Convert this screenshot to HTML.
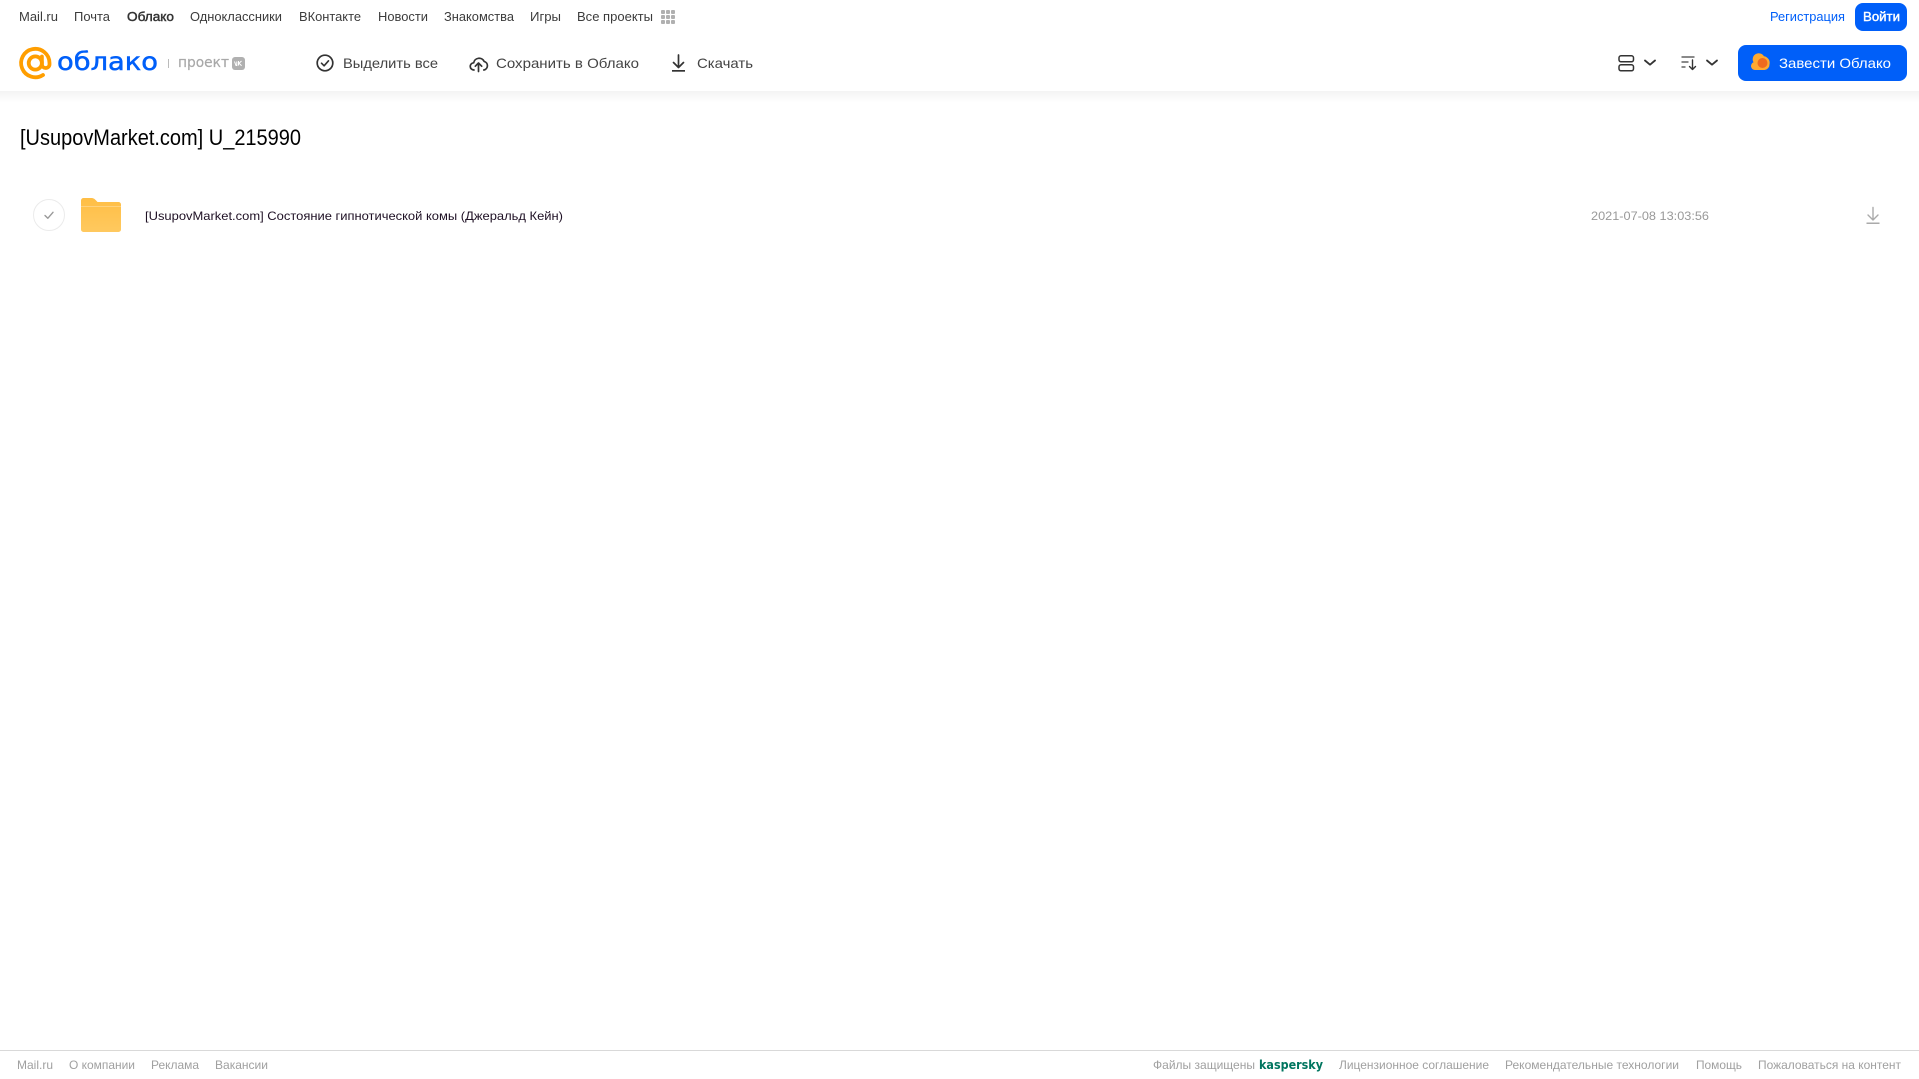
<!DOCTYPE html>
<html lang="ru">
<head>
<meta charset="utf-8">
<title>Облако</title>
<style>
html,body{margin:0;padding:0;background:#fff;width:1919px;height:1079px;overflow:hidden}
.shadow{position:absolute;left:0;top:91px;width:1919px;height:12px;background:linear-gradient(#f3f3f3,#fff)}
svg{position:absolute;left:0;top:0;display:block}
text{font-family:"Liberation Sans",sans-serif;white-space:pre}
.n{font-size:13px;fill:#3c3c3c}
.t{font-size:14px;fill:#444}
.f{font-size:12px;fill:#a0a0a0}
.d{font-family:"DejaVu Sans","Liberation Sans",sans-serif}
</style>
</head>
<body>
<div class="shadow"></div>
<svg width="1919" height="1079" viewBox="0 0 1919 1079" xmlns="http://www.w3.org/2000/svg">
  <!-- top nav -->
  <text class="n" x="19" y="21" textLength="39" lengthAdjust="spacingAndGlyphs">Mail.ru</text>
  <text class="n" x="74" y="21" textLength="36" lengthAdjust="spacingAndGlyphs">Почта</text>
  <text class="n" x="127" y="21" style="fill:#333" stroke="#333" stroke-width=".45" textLength="47" lengthAdjust="spacingAndGlyphs">Облако</text>
  <text class="n" x="190" y="21" textLength="92" lengthAdjust="spacingAndGlyphs">Одноклассники</text>
  <text class="n" x="299" y="21" textLength="62" lengthAdjust="spacingAndGlyphs">ВКонтакте</text>
  <text class="n" x="378" y="21" textLength="50" lengthAdjust="spacingAndGlyphs">Новости</text>
  <text class="n" x="444" y="21" textLength="70" lengthAdjust="spacingAndGlyphs">Знакомства</text>
  <text class="n" x="530" y="21" textLength="31" lengthAdjust="spacingAndGlyphs">Игры</text>
  <text class="n" x="577" y="21" textLength="76" lengthAdjust="spacingAndGlyphs">Все проекты</text>
  <g fill="#b0b0b0">
    <rect x="661" y="10" width="4" height="4" rx="1"/><rect x="666" y="10" width="4" height="4" rx="1"/><rect x="671" y="10" width="4" height="4" rx="1"/>
    <rect x="661" y="15" width="4" height="4" rx="1"/><rect x="666" y="15" width="4" height="4" rx="1"/><rect x="671" y="15" width="4" height="4" rx="1"/>
    <rect x="661" y="20" width="4" height="4" rx="1"/><rect x="666" y="20" width="4" height="4" rx="1"/><rect x="671" y="20" width="4" height="4" rx="1"/>
  </g>
  <text class="n" x="1770" y="21" style="fill:#005ff9" textLength="75" lengthAdjust="spacingAndGlyphs">Регистрация</text>
  <rect x="1855" y="3" width="52" height="28" rx="8" fill="#005ff9"/>
  <text class="n" x="1863" y="21" style="fill:#fff" stroke="#fff" stroke-width=".4" textLength="37" lengthAdjust="spacingAndGlyphs">Войти</text>

  <!-- logo -->
  <g fill="none" stroke="#ff9e00" stroke-width="3.8" stroke-linecap="round">
    <circle cx="35.300" cy="63" r="6.600"/>
    <path d="M41.900 56.500V64.500a3.700 3.700 0 0 0 7.600 -.6V63a14.200 14.200 0 1 0 -6.500 12"/>
  </g>
  <text class="d" x="57" y="70" font-size="25" fill="#005ff9" stroke="#005ff9" stroke-width=".5" textLength="101" lengthAdjust="spacingAndGlyphs">облако</text>
  <rect x="168" y="59" width="1" height="9" fill="#bbb"/>
  <text class="d" x="178" y="67" font-size="14" fill="#a8a8a8" stroke="#a8a8a8" stroke-width=".2" textLength="51" lengthAdjust="spacingAndGlyphs">проект</text>
  <rect x="232" y="57" width="13" height="13" rx="3" fill="#b0b0b0"/>
  <path d="M234.500 61.500l1.500 4h.8v-4M238.500 61v4.500M241.500 61l-2.500 2.300 2.600 2.400" fill="none" stroke="#fff" stroke-width="1"/>

  <!-- toolbar -->
  <circle cx="325" cy="63" r="7.800" fill="none" stroke="#333" stroke-width="1.700"/>
  <path d="M321.500 63.200l2.600 2.600 4.400-5" fill="none" stroke="#333" stroke-width="1.600" stroke-linecap="round" stroke-linejoin="round"/>
  <text class="t" x="343" y="68" textLength="95" lengthAdjust="spacingAndGlyphs">Выделить все</text>

  <path d="M474 70a3.600 3.600 0 0 1 -.3 -7.200a5.500 5.500 0 0 1 10.400 -1.400a4.400 4.400 0 0 1 -.3 8.600" fill="none" stroke="#333" stroke-width="1.700" stroke-linecap="round" stroke-linejoin="round"/>
  <path d="M478.500 71.500V63M475.300 66.200l3.200 -3.200 3.200 3.200" fill="none" stroke="#333" stroke-width="1.700" stroke-linecap="round" stroke-linejoin="round"/>
  <text class="t" x="496" y="68" textLength="143" lengthAdjust="spacingAndGlyphs">Сохранить в Облако</text>

  <path d="M678.500 55V67.500M673.500 62.500l5 5 5-5" fill="none" stroke="#333" stroke-width="1.700" stroke-linecap="round" stroke-linejoin="round"/>
  <rect x="672" y="70" width="13" height="1.700" fill="#333"/>
  <text class="t" x="697" y="68" textLength="56" lengthAdjust="spacingAndGlyphs">Скачать</text>

  <!-- right tools -->
  <rect x="1619" y="55.800" width="14.500" height="6" rx="2" fill="none" stroke="#333" stroke-width="1.500"/>
  <rect x="1619" y="64.800" width="14.500" height="6" rx="2" fill="none" stroke="#333" stroke-width="1.500"/>
  <path d="M1645 60.500l5 4.200 5-4.200" fill="none" stroke="#333" stroke-width="1.800" stroke-linecap="round" stroke-linejoin="round"/>
  <path d="M1681.500 57h13M1681.500 62h7M1681.500 67h4" fill="none" stroke="#444" stroke-width="1.200"/>
  <path d="M1692.500 60v9.500M1689.500 66.500l3 3 3-3" fill="none" stroke="#333" stroke-width="1.400" stroke-linecap="round" stroke-linejoin="round"/>
  <path d="M1707 60.500l5 4.200 5-4.200" fill="none" stroke="#333" stroke-width="1.800" stroke-linecap="round" stroke-linejoin="round"/>

  <rect x="1738" y="45" width="169" height="36" rx="8" fill="#005ff9"/>
  <path d="M1755 70a4 4 0 0 1 -1.500 -7.700a6 6 0 0 1 10.500 -6a6.500 6.500 0 0 1 5.500 8a5.500 5.500 0 0 1 -5 5.700z" fill="#ffa930"/>
  <circle cx="1762.500" cy="63" r="5" fill="#ee6a1f"/>
  <text class="t" x="1779" y="68" style="fill:#fff" textLength="112" lengthAdjust="spacingAndGlyphs">Завести Облако</text>

  <!-- title -->
  <text x="20" y="145" font-size="22" fill="#000" textLength="281" lengthAdjust="spacingAndGlyphs">[UsupovMarket.com] U_215990</text>

  <!-- row -->
  <circle cx="49" cy="215" r="15.500" fill="#fff" stroke="#ebebeb" stroke-width="1"/>
  <path d="M45 215.500l2.800 2.800 5.200-6" fill="none" stroke="#999" stroke-width="1.400" stroke-linecap="round" stroke-linejoin="round"/>
  <defs>
    <linearGradient id="fg" x1="0" y1="0" x2="0" y2="1"><stop offset="0" stop-color="#ffbe45"/><stop offset="1" stop-color="#ffc95f"/></linearGradient>
  </defs>
  <path d="M81 200.500a2.500 2.500 0 0 1 2.500 -2.500h7.500c2.500 0 3.500 .8 5 2.400l1.500 1.600h21a2.500 2.500 0 0 1 2.500 2.500V229.500a2.500 2.500 0 0 1 -2.500 2.500H83.500a2.500 2.500 0 0 1 -2.500 -2.500z" fill="url(#fg)"/>
  <rect x="81" y="206" width="40" height="1" fill="#ffd27d"/>
  <text x="145" y="220" font-size="12" fill="#1e1024" textLength="418" lengthAdjust="spacingAndGlyphs">[UsupovMarket.com] Состояние гипнотической комы (Джеральд Кейн)</text>
  <text x="1591" y="220" font-size="12" fill="#999" textLength="118" lengthAdjust="spacingAndGlyphs">2021-07-08 13:03:56</text>
  <path d="M1873 207.500V220M1868 215l5 5 5-5" fill="none" stroke="#aaa" stroke-width="1.400" stroke-linecap="round" stroke-linejoin="round"/>
  <rect x="1866.500" y="222.500" width="13" height="1.500" fill="#aaa"/>

  <!-- footer -->
  <rect x="0" y="1050" width="1919" height="1" fill="#d9d9d9"/>
  <text class="f" x="17" y="1069" textLength="36" lengthAdjust="spacingAndGlyphs">Mail.ru</text>
  <text class="f" x="69" y="1069" textLength="66" lengthAdjust="spacingAndGlyphs">О компании</text>
  <text class="f" x="151" y="1069" textLength="48" lengthAdjust="spacingAndGlyphs">Реклама</text>
  <text class="f" x="215" y="1069" textLength="53" lengthAdjust="spacingAndGlyphs">Вакансии</text>
  <text class="f" x="1153" y="1069" textLength="102" lengthAdjust="spacingAndGlyphs">Файлы защищены</text>
  <text class="d" x="1259" y="1069" font-size="12.500" font-weight="700" fill="#00755f" textLength="64" lengthAdjust="spacingAndGlyphs">kaspersky</text>
  <text class="f" x="1339" y="1069" textLength="150" lengthAdjust="spacingAndGlyphs">Лицензионное соглашение</text>
  <text class="f" x="1505" y="1069" textLength="174" lengthAdjust="spacingAndGlyphs">Рекомендательные технологии</text>
  <text class="f" x="1696" y="1069" textLength="46" lengthAdjust="spacingAndGlyphs">Помощь</text>
  <text class="f" x="1758" y="1069" textLength="143" lengthAdjust="spacingAndGlyphs">Пожаловаться на контент</text>
</svg>
</body>
</html>
